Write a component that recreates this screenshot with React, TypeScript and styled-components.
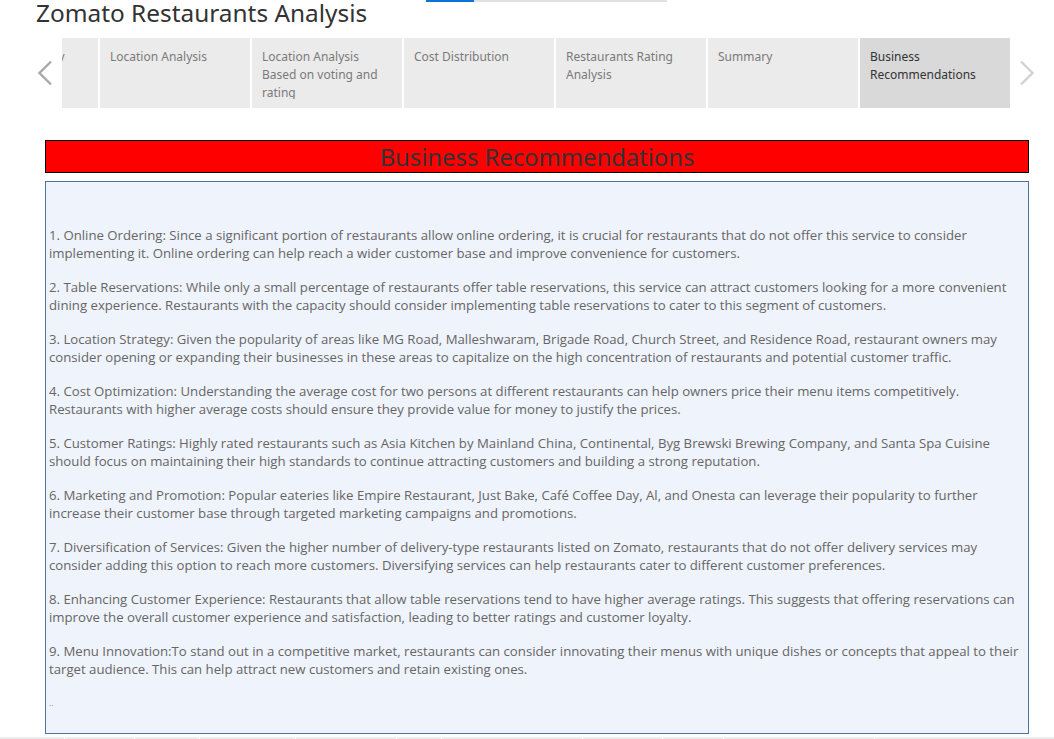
import React from 'react';
import styled, { createGlobalStyle } from 'styled-components';

const GlobalStyle = createGlobalStyle`
  html, body {
    margin: 0;
    padding: 0;
    background: #ffffff;
    overflow: hidden;
  }
  body {
    font-family: "Noto Sans", "Open Sans", sans-serif;
  }
`;

const Page = styled.div`
  width: 1054px;
  height: 739px;
  position: relative;
  overflow: hidden;
`;

const Progress = styled.div`
  position: absolute;
  top: 0;
  left: 426px;
  width: 241px;
  height: 2px;
  background: #e1e1e1;
`;

const ProgressFill = styled.div`
  width: 48px;
  height: 100%;
  background: #0b72d8;
`;

const Title = styled.h1`
  margin: 0;
  padding: 0 0 0 36px;
  height: 38px;
  font-size: 24.4px;
  font-weight: 400;
  line-height: 26px;
  color: #333333;
  white-space: nowrap;
`;

const TabBar = styled.div`
  display: flex;
  align-items: center;
  height: 70px;
`;

const Arrow = styled.div<{ $dim?: boolean; $side: 'left' | 'right' }>`
  width: ${(p) => (p.$side === 'left' ? '62px' : '44px')};
  height: 70px;
  box-sizing: border-box;
  display: flex;
  align-items: center;
  justify-content: ${(p) => (p.$side === 'left' ? 'flex-end' : 'flex-start')};
  padding: ${(p) => (p.$side === 'left' ? '0 9px 0 0' : '0 0 0 9px')};
  color: ${(p) => (p.$dim ? '#d2d2d2' : '#a8a8a8')};
  flex-shrink: 0;
`;

const TabViewport = styled.div`
  width: 948px;
  height: 70px;
  overflow: hidden;
  flex-shrink: 0;
`;

const TabRow = styled.div`
  display: flex;
  gap: 2px;
  margin-left: -114px;
`;

const Tab = styled.div<{ $active?: boolean }>`
  width: 150px;
  height: 70px;
  flex-shrink: 0;
  box-sizing: border-box;
  padding: 10px 10px 0 10px;
  background: ${(p) => (p.$active ? '#d9d9d9' : '#ebebeb')};
`;

const TabLabel = styled.div<{ $active?: boolean }>`
  font-size: 12px;
  line-height: 18px;
  max-height: 51px;
  overflow: hidden;
  color: ${(p) => (p.$active ? '#333333' : '#7a7a7a')};
`;

const Dashboard = styled.div`
  padding: 32px 25px 0 45px;
  display: flex;
  flex-direction: column;
  gap: 8px;
`;

const Banner = styled.div`
  height: 33px;
  box-sizing: border-box;
  border: 1px solid #000000;
  background: #ff0000;
  display: flex;
  align-items: center;
  justify-content: center;
  font-size: 23.8px;
  color: #333333;
`;

const TextBox = styled.div`
  height: 553px;
  box-sizing: border-box;
  border: 1px solid #4f72a3;
  background: #eff3fb;
  padding: 44px 3px 0 3px;
  overflow: hidden;
`;

const Para = styled.p`
  margin: 0 0 16px 0;
  font-family: "Open Sans", "Noto Sans", sans-serif;
  font-size: 13.2px;
  line-height: 18px;
  color: #666666;
`;

const Dots = styled(Para)`
  font-size: 9px;
  color: #999999;
`;

const BottomStrip = styled.div`
  position: absolute;
  left: 0;
  bottom: 0;
  width: 1054px;
  height: 2px;
  display: flex;
  gap: 1px;
`;

const StripCell = styled.div<{ $w: number }>`
  width: ${(p) => p.$w}px;
  background: #ececec;
`;

const Chevron = ({ dir }: { dir: 'left' | 'right' }) => (
  <svg width="17" height="26" viewBox="0 0 17 26" fill="none">
    <path
      d={dir === 'left' ? 'M15 1.5 L3.5 13 L15 24.5' : 'M2 1.5 L13.5 13 L2 24.5'}
      stroke="currentColor"
      strokeWidth="2.4"
    />
  </svg>
);

const tabs = [
  'Datasets Summary',
  'Location Analysis',
  'Location Analysis Based on voting and rating',
  'Cost Distribution',
  'Restaurants Rating Analysis',
  'Summary',
  'Business Recommendations',
];

const paragraphs = [
  '1. Online Ordering: Since a significant portion of restaurants allow online ordering, it is crucial for restaurants that do not offer this service to consider implementing it. Online ordering can help reach a wider customer base and improve convenience for customers.',
  '2. Table Reservations: While only a small percentage of restaurants offer table reservations, this service can attract customers looking for a more convenient dining experience. Restaurants with the capacity should consider implementing table reservations to cater to this segment of customers.',
  '3. Location Strategy: Given the popularity of areas like MG Road, Malleshwaram, Brigade Road, Church Street, and Residence Road, restaurant owners may consider opening or expanding their businesses in these areas to capitalize on the high concentration of restaurants and potential customer traffic.',
  '4. Cost Optimization: Understanding the average cost for two persons at different restaurants can help owners price their menu items competitively. Restaurants with higher average costs should ensure they provide value for money to justify the prices.',
  '5. Customer Ratings: Highly rated restaurants such as Asia Kitchen by Mainland China, Continental, Byg Brewski Brewing Company, and Santa Spa Cuisine should focus on maintaining their high standards to continue attracting customers and building a strong reputation.',
  '6. Marketing and Promotion: Popular eateries like Empire Restaurant, Just Bake, Café Coffee Day, Al, and Onesta can leverage their popularity to further increase their customer base through targeted marketing campaigns and promotions.',
  '7. Diversification of Services: Given the higher number of delivery-type restaurants listed on Zomato, restaurants that do not offer delivery services may consider adding this option to reach more customers. Diversifying services can help restaurants cater to different customer preferences.',
  '8. Enhancing Customer Experience: Restaurants that allow table reservations tend to have higher average ratings. This suggests that offering reservations can improve the overall customer experience and satisfaction, leading to better ratings and customer loyalty.',
  '9. Menu Innovation:To stand out in a competitive market, restaurants can consider innovating their menus with unique dishes or concepts that appeal to their target audience. This can help attract new customers and retain existing ones.',
];

const strip = [64, 70, 64, 95, 100, 45, 140, 80, 60, 150, 180];

export default function App() {
  return (
    <Page>
      <GlobalStyle />
      <Progress>
        <ProgressFill />
      </Progress>
      <Title>Zomato Restaurants Analysis</Title>
      <TabBar>
        <Arrow $side="left">
          <Chevron dir="left" />
        </Arrow>
        <TabViewport>
          <TabRow>
            {tabs.map((t, i) => (
              <Tab key={t} $active={i === tabs.length - 1}>
                <TabLabel $active={i === tabs.length - 1}>{t}</TabLabel>
              </Tab>
            ))}
          </TabRow>
        </TabViewport>
        <Arrow $side="right" $dim>
          <Chevron dir="right" />
        </Arrow>
      </TabBar>
      <Dashboard>
        <Banner>Business Recommendations</Banner>
        <TextBox>
          {paragraphs.map((p) => (
            <Para key={p.slice(0, 12)}>{p}</Para>
          ))}
          <Dots>..</Dots>
        </TextBox>
      </Dashboard>
      <BottomStrip>
        {strip.map((w, i) => (
          <StripCell key={i} $w={w} />
        ))}
      </BottomStrip>
    </Page>
  );
}
